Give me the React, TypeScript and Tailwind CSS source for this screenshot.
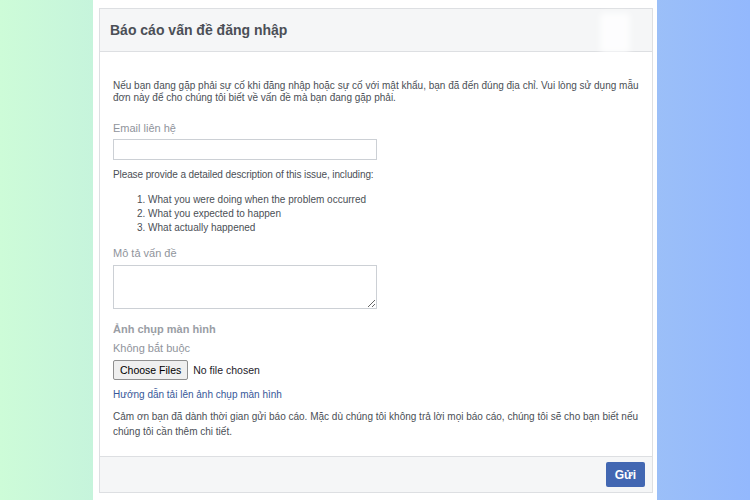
import React from "react";

const App: React.FC = () => (
  <div
    className="flex h-[500px] w-[750px] overflow-hidden text-[#4b4f56]"
    style={{ fontFamily: '"Liberation Sans", Arial, sans-serif' }}
  >
    <div className="w-[93px] bg-gradient-to-r from-[#cdfcd8] to-[#c6f4dc]" />
    <div className="flex-1 bg-white pl-[6px] pr-[4px] pt-[8px]">
      <div className="flex h-[485px] flex-col border border-[#dddfe2] bg-white">
        <div className="relative flex h-[43px] items-center border-b border-[#dddfe2] bg-[#f5f6f7] px-[10px]">
          <h3 className="text-[14px] font-bold text-[#4b4f56]">Báo cáo vấn đề đăng nhập</h3>
          <div className="absolute right-[22px] top-[4px] h-[40px] w-[30px] rounded bg-white/80 blur-[3px]" />
        </div>

        <div className="flex-1 px-[13px] pt-[28px] text-[10px] leading-[12px]">
          <p>
            Nếu bạn đang gặp phải sự cố khi đăng nhập hoặc sự cố với mật khẩu, bạn đã đến đúng địa chỉ. Vui lòng sử dụng mẫu
            <br />
            đơn này để cho chúng tôi biết về vấn đề mà bạn đang gặp phải.
          </p>

          <label className="mt-[18px] block text-[11px] text-[#90949c]">Email liên hệ</label>
          <input className="mt-[5px] block h-[21px] w-[264px] border border-[#ccd0d5] bg-white outline-none" />

          <p className="mt-[9px] tracking-[-0.1px]">Please provide a detailed description of this issue, including:</p>
          <ol className="mt-[12px] pl-[24px] leading-[14px]">
            <li>1. What you were doing when the problem occurred</li>
            <li>2. What you expected to happen</li>
            <li>3. What actually happened</li>
          </ol>

          <label className="mt-[12px] block text-[11px] text-[#90949c]">Mô tả vấn đề</label>
          <textarea className="mt-[6px] block h-[44px] w-[264px] resize border border-[#ccd0d5] bg-white outline-none" />

          <div className="mt-[14px] text-[11px] font-bold text-[#9a9ea5]">Ảnh chụp màn hình</div>
          <div className="mt-[7px] text-[11px] text-[#90949c]">Không bắt buộc</div>
          <div className="mt-[6px] flex items-center gap-[5px] text-[10.5px] text-[#1d2129]">
            <button
              type="button"
              className="h-[20px] rounded-[2px] border border-[#8f8f8f] bg-[#efefef] px-[6px] text-[10.5px] text-black"
            >
              Choose Files
            </button>
            <span>No file chosen</span>
          </div>
          <a className="mt-[9px] block text-[#365899]">Hướng dẫn tải lên ảnh chụp màn hình</a>

          <p className="mt-[8px] leading-[15px]">
            Cảm ơn bạn đã dành thời gian gửi báo cáo. Mặc dù chúng tôi không trả lời mọi báo cáo, chúng tôi sẽ cho bạn biết nếu
            <br />
            chúng tôi cần thêm chi tiết.
          </p>
        </div>

        <div className="flex h-[36px] items-center justify-end border-t border-[#dddfe2] bg-[#f5f6f7] px-[7px]">
          <button
            type="button"
            className="h-[25px] rounded-[2px] bg-[#4267b2] px-[9px] text-[12px] font-bold text-white"
          >
            Gửi
          </button>
        </div>
      </div>
    </div>
    <div className="w-[93px] bg-gradient-to-r from-[#9bbff8] to-[#93b8fd]" />
  </div>
);

export default App;
